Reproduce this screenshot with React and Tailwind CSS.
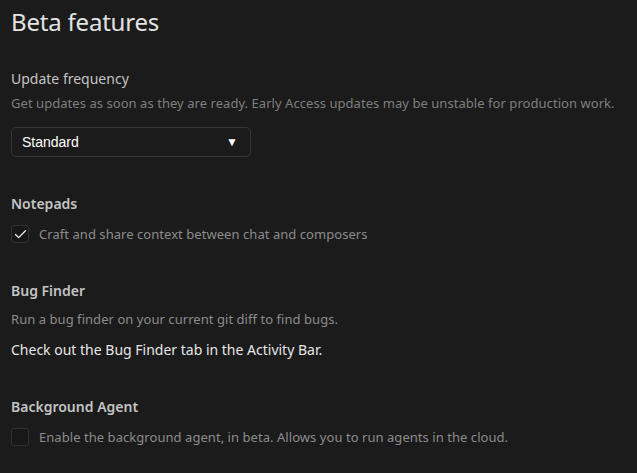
import { Check } from "lucide-react";

const font = { fontFamily: '"Noto Sans", "Open Sans", sans-serif' };

function Checkbox({ checked }) {
  return (
    <div className="w-[18px] h-[18px] shrink-0 rounded-[3px] border border-[#333333] bg-[#181818] flex items-center justify-center">
      {checked && <Check size={15} strokeWidth={2} className="text-[#e8eef8]" />}
    </div>
  );
}

export default function App() {
  return (
    <div
      className="w-[637px] h-[473px] overflow-hidden bg-[#1b1b1b] px-[11px] pt-[6px]"
      style={font}
    >
      <h1 className="text-[24px] leading-[32px] text-[#e3e3e3] tracking-[-0.2px]">Beta features</h1>

      {/* Update frequency */}
      <div className="mt-[31px]">
        <div className="text-[14px] leading-[20px] text-[#c4c4c4]">Update frequency</div>
        <p className="mt-[5px] text-[13px] leading-[18px] text-[#7f7f7f] tracking-[0.05px]">
          Get updates as soon as they are ready. Early Access updates may be unstable for production work.
        </p>
        <div
          className="mt-[15px] w-[240px] h-[30px] rounded-[5px] border border-[#353535] bg-[#1b1b1b] flex items-center justify-between pl-[10px] pr-[12px] text-white text-[14px]"
          style={{ fontFamily: '"Liberation Sans", Arial, sans-serif' }}
        >
          <span>Standard</span>
          <span className="text-[12px]">▼</span>
        </div>
      </div>

      {/* Notepads */}
      <div className="mt-[37px]">
        <div className="text-[14px] leading-[20px] font-semibold text-[#c4c4c4]">Notepads</div>
        <div className="mt-[11px] flex items-center gap-[10px]">
          <Checkbox checked />
          <span className="text-[13px] leading-[18px] text-[#8c8c8c] tracking-[0.05px]">
            Craft and share context between chat and composers
          </span>
        </div>
      </div>

      {/* Bug Finder */}
      <div className="mt-[38px]">
        <div className="text-[14px] leading-[20px] font-semibold text-[#c4c4c4]">Bug Finder</div>
        <p className="mt-[9px] text-[13px] leading-[18px] text-[#8c8c8c] tracking-[0.05px]">
          Run a bug finder on your current git diff to find bugs.
        </p>
        <p className="mt-[12px] text-[14px] leading-[20px] text-[#e6e6e6]">
          Check out the Bug Finder tab in the Activity Bar.
        </p>
      </div>

      {/* Background Agent */}
      <div className="mt-[37px]">
        <div className="text-[14px] leading-[20px] font-semibold text-[#c4c4c4]">Background Agent</div>
        <div className="mt-[11px] flex items-center gap-[10px]">
          <Checkbox />
          <span className="text-[13px] leading-[18px] text-[#8c8c8c] tracking-[0.05px]">
            Enable the background agent, in beta. Allows you to run agents in the cloud.
          </span>
        </div>
      </div>
    </div>
  );
}
